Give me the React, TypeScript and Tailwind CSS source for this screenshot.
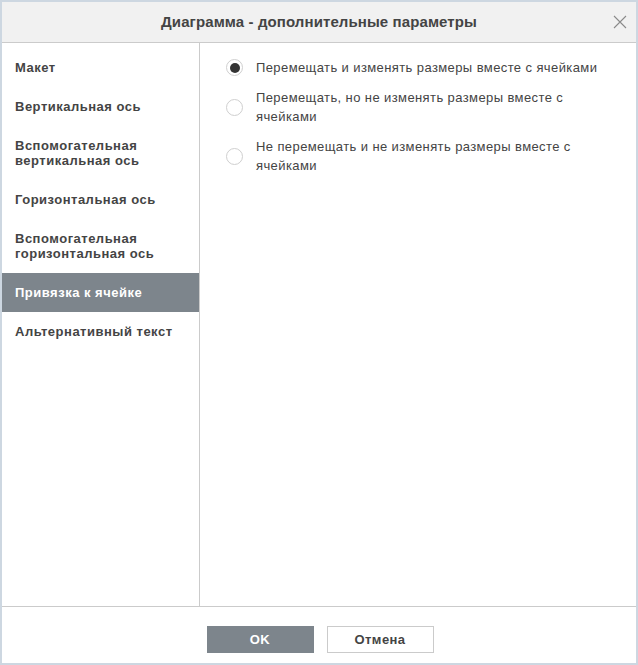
import React, { useState } from 'react'

const tabs = [
  'Макет',
  'Вертикальная ось',
  'Вспомогательная вертикальная ось',
  'Горизонтальная ось',
  'Вспомогательная горизонтальная ось',
  'Привязка к ячейке',
  'Альтернативный текст',
]

const options = [
  'Перемещать и изменять размеры вместе с ячейками',
  'Перемещать, но не изменять размеры вместе с ячейками',
  'Не перемещать и не изменять размеры вместе с ячейками',
]

export default function App() {
  const [active, setActive] = useState(5)
  const [choice, setChoice] = useState(0)

  return (
    <div
      className="w-[638px] h-[665px] border-2 border-[#cdd7e1] bg-white flex flex-col text-[#444]"
      style={{ fontFamily: '"Liberation Sans", Arial, sans-serif' }}
    >
      {/* header */}
      <div className="relative h-[41px] shrink-0 bg-[#f1f1f1] border-b border-[#cbcbcb] flex items-center justify-center">
        <span className="text-[15px] font-bold tracking-[0.1px]">Диаграмма - дополнительные параметры</span>
        <button className="absolute right-[9px] top-[13px] w-[14px] h-[14px]">
          <svg viewBox="0 0 14 14" className="w-[14px] h-[14px]" stroke="#8a8a8a" strokeWidth="1.1" fill="none">
            <path d="M1 1L13 13M13 1L1 13" />
          </svg>
        </button>
      </div>

      {/* body */}
      <div className="flex flex-1 min-h-0">
        <nav className="w-[198px] shrink-0 border-r border-[#cbcbcb] pt-[5px]">
          {tabs.map((t, i) => (
            <div
              key={t}
              onClick={() => setActive(i)}
              className={`px-[13px] py-[12px] text-[13px] tracking-[0.5px] font-bold leading-[15px] cursor-pointer ${
                active === i ? 'bg-[#7d858c] text-white' : 'text-[#444]'
              }`}
            >
              {t}
            </div>
          ))}
        </nav>

        <div className="flex-1 pl-[26px] pt-[15px] flex flex-col gap-[11px]">
          {options.map((o, i) => (
            <label key={o} className="flex items-center gap-[13px] cursor-pointer" onClick={() => setChoice(i)}>
              <span className="w-[17px] h-[17px] shrink-0 rounded-full border-[1.5px] border-[#cfcfcf] bg-white flex items-center justify-center">
                {choice === i && <span className="w-[10px] h-[10px] rounded-full bg-[#333]" />}
              </span>
              <span className="w-[350px] text-[13px] tracking-[0.4px] leading-[19px] text-[#444]">{o}</span>
            </label>
          ))}
        </div>
      </div>

      {/* footer */}
      <div className="h-[57px] shrink-0 border-t border-[#cbcbcb] flex justify-center gap-[13px] pt-[19px] pl-[2px]">
        <button className="w-[107px] h-[27px] bg-[#7d858c] text-white text-[13px] tracking-[0.4px] font-bold">OK</button>
        <button className="w-[107px] h-[27px] bg-white border border-[#cbcbcb] text-[#444] text-[13px] tracking-[0.4px] font-bold">
          Отмена
        </button>
      </div>
    </div>
  )
}
